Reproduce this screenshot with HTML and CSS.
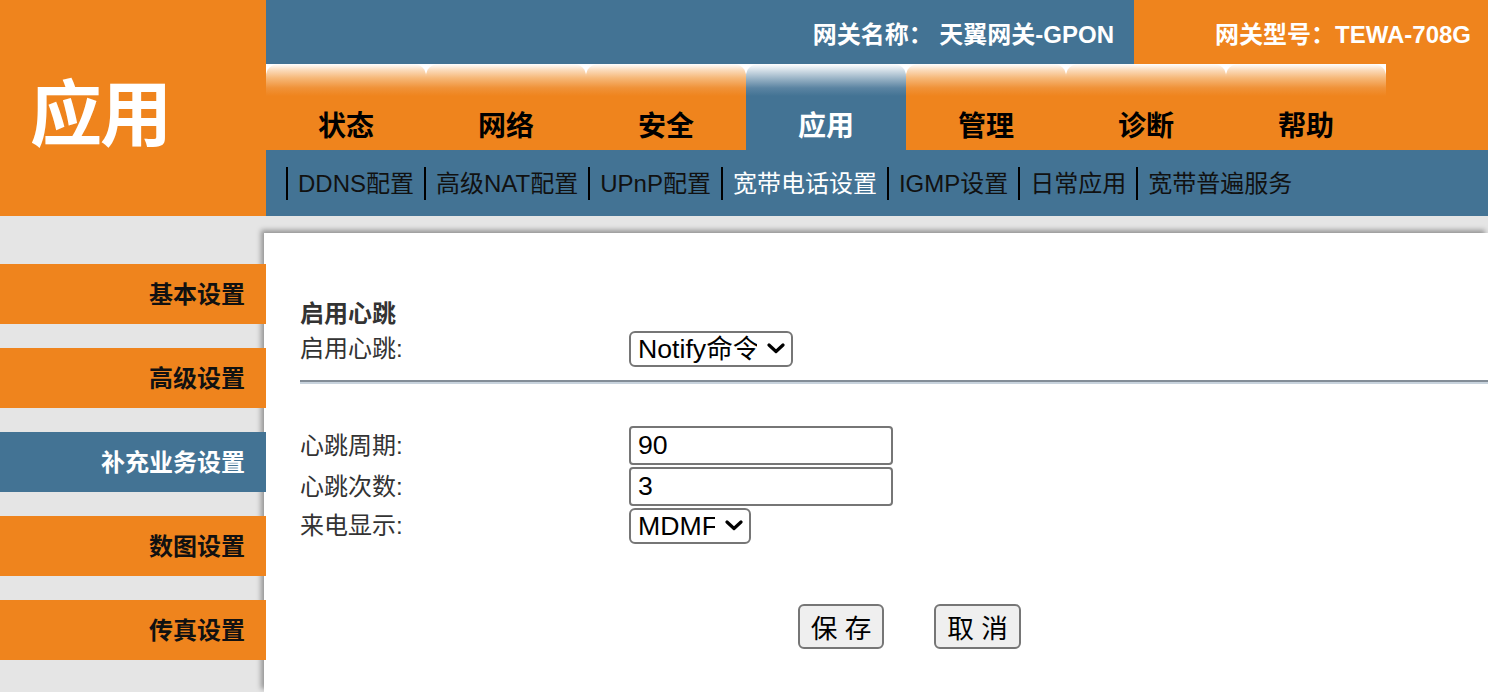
FILE: index.html
```html
<!DOCTYPE html>
<html lang="zh-CN">
<head>
<meta charset="utf-8">
<title>应用 - 补充业务设置</title>
<link rel="stylesheet" href="styles.css">
</head>
<body>
<div class="page">
  <header class="top">
    <div class="logo">应用</div>
    <div class="head-main">
      <div class="info-row">
        <div class="info-name">网关名称： 天翼网关-GPON</div>
        <div class="info-model">网关型号：TEWA-708G</div>
      </div>
      <div class="tab-row">
        <nav class="tabs">
          <div class="tab">状态</div>
          <div class="tab">网络</div>
          <div class="tab">安全</div>
          <div class="tab tab-active">应用</div>
          <div class="tab">管理</div>
          <div class="tab">诊断</div>
          <div class="tab">帮助</div>
        </nav>
      </div>
      <nav class="subnav">
        <span class="sub">DDNS配置</span>
        <span class="sub">高级NAT配置</span>
        <span class="sub">UPnP配置</span>
        <span class="sub sub-active">宽带电话设置</span>
        <span class="sub">IGMP设置</span>
        <span class="sub">日常应用</span>
        <span class="sub">宽带普遍服务</span>
      </nav>
    </div>
  </header>
  <div class="body">
    <aside class="side">
      <div class="side-item">基本设置</div>
      <div class="side-item">高级设置</div>
      <div class="side-item side-active">补充业务设置</div>
      <div class="side-item">数图设置</div>
      <div class="side-item">传真设置</div>
    </aside>
    <main class="panel">
      <div class="heading">启用心跳</div>
      <div class="row row-first">
        <label class="label">启用心跳:</label>
        <span class="select-wrap select-notify">
          <select class="select"><option>Notify命令</option></select>
          <svg class="chev" width="18" height="11" viewBox="0 0 18 11"><path d="M2 2 L9 8.5 L16 2" fill="none" stroke="#000" stroke-width="3.2" stroke-linecap="round" stroke-linejoin="round"/></svg>
        </span>
      </div>
      <div class="divider"></div>
      <div class="group">
        <div class="row">
          <label class="label">心跳周期:</label>
          <input class="input" type="text" value="90">
        </div>
        <div class="row">
          <label class="label">心跳次数:</label>
          <input class="input" type="text" value="3">
        </div>
        <div class="row">
          <label class="label">来电显示:</label>
          <span class="select-wrap select-mdmf">
            <select class="select"><option>MDMF</option></select>
            <svg class="chev" width="18" height="11" viewBox="0 0 18 11"><path d="M2 2 L9 8.5 L16 2" fill="none" stroke="#000" stroke-width="3.2" stroke-linecap="round" stroke-linejoin="round"/></svg>
          </span>
        </div>
      </div>
      <div class="buttons">
        <button class="btn btn-save" type="button">保 存</button>
        <button class="btn btn-cancel" type="button">取 消</button>
      </div>
    </main>
  </div>
</div>
</body>
</html>
```

FILE: styles.css
```css
html, body {
  margin: 0;
  padding: 0;
  height: 100%;
  overflow: hidden;
}

body {
  font-family: "Liberation Sans", "Noto Sans CJK SC", sans-serif;
  background: #e5e5e5;
  color: #111;
}

.page {
  width: 1488px;
}

/* ---------- header ---------- */
.top {
  display: flex;
  height: 216px;
}

.logo {
  width: 266px;
  flex: none;
  background: #ef841d;
  color: #fff;
  font-size: 72px;
  font-weight: 700;
  display: flex;
  align-items: center;
  padding-left: 30px;
  box-sizing: border-box;
  letter-spacing: -2px;
}

.head-main {
  flex: 1;
  display: flex;
  flex-direction: column;
  background: #ef841d;
}

.info-row {
  display: flex;
  height: 64px;
}

.info-name {
  width: 868px;
  background: #437394;
  color: #fff;
  font-size: 24px;
  font-weight: 700;
  display: flex;
  align-items: center;
  justify-content: flex-end;
  padding-right: 20px;
  box-sizing: border-box;
}

.info-model {
  flex: 1;
  color: #fff;
  font-size: 24px;
  font-weight: 700;
  display: flex;
  align-items: center;
  justify-content: flex-end;
  padding-right: 17px;
}

.tab-row {
  height: 86px;
  display: flex;
}

.tabs {
  display: flex;
  background: linear-gradient(#ffffff 0, #ffffff 14px, #ef841d 14px);
}

.tab {
  width: 160px;
  height: 86px;
  box-sizing: border-box;
  border-radius: 12px 12px 0 0;
  background: linear-gradient(#ffffff 0px, #fbdcbc 6px, #f6b878 14px, #f09238 24px, #ef841d 32px);
  color: #000;
  font-size: 28px;
  font-weight: 700;
  line-height: 32px;
  display: flex;
  align-items: flex-end;
  justify-content: center;
  padding-bottom: 7px;
}

.tab-active {
  background: linear-gradient(#ffffff 0px, #d5e0e8 6px, #9db6c8 14px, #5b84a2 24px, #437394 32px);
  color: #fff;
}

.subnav {
  height: 66px;
  background: #437394;
  display: flex;
  align-items: center;
  padding-left: 20px;
}

.sub {
  border-left: 2px solid #000;
  line-height: 33px;
  padding: 0 10px 0 10px;
  font-size: 24px;
  color: #111;
  white-space: nowrap;
}

.sub-active {
  color: #fff;
}

/* ---------- body ---------- */
.body {
  display: grid;
  grid-template-columns: 264px 1fr;
  height: calc(100vh - 216px);
}

.side {
  padding-top: 48px;
  display: flex;
  flex-direction: column;
  gap: 24px;
}

.side-item {
  position: relative;
  z-index: 2;
  width: 266px;
  height: 60px;
  background: #ef841d;
  color: #111;
  font-size: 24px;
  font-weight: 700;
  display: flex;
  align-items: center;
  justify-content: flex-end;
  padding-right: 21px;
  padding-bottom: 4px;
  box-sizing: border-box;
}

.side-active {
  background: #437394;
  color: #fff;
}

.panel {
  margin-top: 17px;
  background: #fff;
  box-shadow: -3px -3px 5px rgba(0, 0, 0, 0.35);
  padding: 66px 0 0 36px;
  color: #333;
  font-size: 24px;
}

.heading {
  font-weight: 700;
  line-height: 30px;
}

.row {
  display: flex;
  align-items: center;
}

.row-first {
  margin-top: 2px;
}

.label {
  width: 329px;
  flex: none;
  line-height: 30px;
  color: #333;
}

.select-wrap {
  position: relative;
  display: inline-block;
}

.select {
  appearance: none;
  -webkit-appearance: none;
  height: 36px;
  border: 2px solid #767676;
  border-radius: 6px;
  background: #fff;
  color: #000;
  font-family: "Liberation Sans", "Noto Sans CJK SC", sans-serif;
  font-size: 26.67px;
  padding: 0 34px 0 7px;
  box-sizing: border-box;
  margin: 0;
  display: block;
}

.select-notify .select {
  width: 164px;
}

.select-mdmf .select {
  width: 122px;
}

.chev {
  position: absolute;
  right: 8px;
  top: 12px;
  pointer-events: none;
}

.divider {
  margin-top: 13px;
  border-top: 2px solid #838d97;
  border-bottom: 2px solid #c8d3dd;
}

.group {
  margin-top: 42px;
  display: flex;
  flex-direction: column;
  gap: 2px;
}

.input {
  width: 264px;
  height: 39px;
  box-sizing: border-box;
  border: 2px solid #767676;
  border-radius: 4px;
  padding: 0 7px;
  margin: 0;
  font-family: "Liberation Sans", "Noto Sans CJK SC", sans-serif;
  font-size: 26.67px;
  color: #000;
  background: #fff;
}

.buttons {
  margin-top: 60px;
  padding-left: 498px;
  display: flex;
  gap: 50px;
}

.btn {
  height: 45px;
  border: 2px solid #767676;
  border-radius: 6px;
  background: #efefef;
  color: #000;
  font-family: "Liberation Sans", "Noto Sans CJK SC", sans-serif;
  font-size: 26.67px;
  padding: 0;
  margin: 0;
  box-sizing: border-box;
}

.btn-save {
  width: 86px;
}

.btn-cancel {
  width: 87px;
}
```
